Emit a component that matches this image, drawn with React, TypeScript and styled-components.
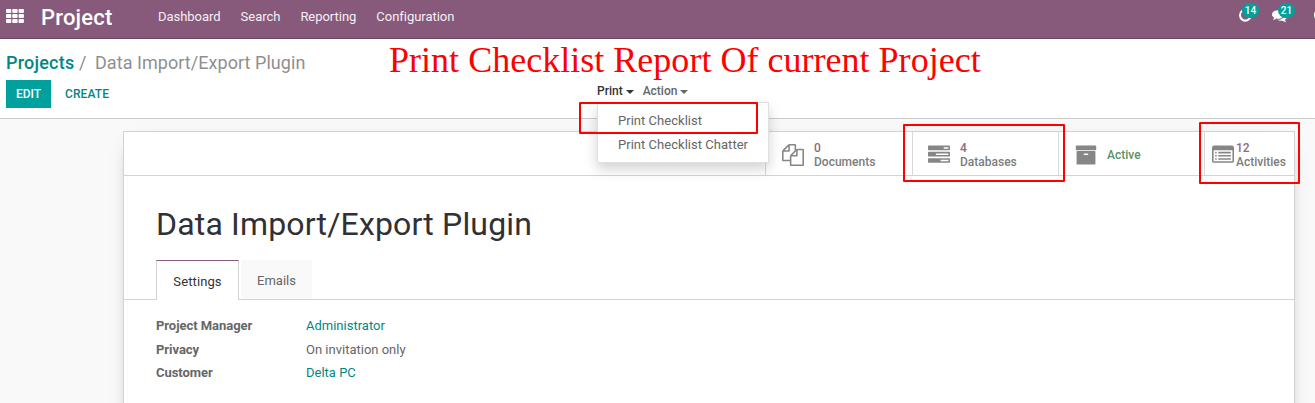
import React from "react";
import styled, { createGlobalStyle, css } from "styled-components";

const Global = createGlobalStyle`
  *, *::before, *::after { box-sizing: border-box; }
  html, body { margin: 0; height: 100%; overflow: hidden; }
  body { background: #f9f9f9; color: #666; font: 13px/20px Roboto, "Liberation Sans", sans-serif; }
`;

const Page = styled.div`
  position: relative;
  height: 403px;
  overflow: hidden;
`;

const NavBar = styled.header`
  display: flex;
  height: 39px;
  padding-left: 6px;
  background: #875a7b;
  border-bottom: 1px solid #68465f;
  color: #fff;
`;

const AppsIcon = styled.svg`
  width: 18px;
  height: 14px;
  margin-top: 9px;
  fill: #fff;
`;

const Brand = styled.div`
  width: 102px;
  margin-left: 17px;
  font-size: 22px;
  font-weight: 500;
  line-height: 35px;
  letter-spacing: 0.2px;
`;

const NavLinks = styled.nav`
  display: flex;
  gap: 20px;
  margin-left: 15px;
  line-height: 33px;
`;

const NavLink = styled.a`
  color: #f5eff3;
  letter-spacing: -0.03px;
`;

const Systray = styled.div`
  display: flex;
  margin-left: auto;
  width: 77px;
  overflow: hidden;
`;

const TrayItem = styled.div<{ $width: number }>`
  position: relative;
  flex: none;
  width: ${(p) => p.$width}px;
  height: 38px;
  padding-top: 8px;
`;

const Badge = styled.span<{ $left: number }>`
  position: absolute;
  top: 3px;
  left: ${(p) => p.$left}px;
  width: 17px;
  height: 15px;
  border-radius: 8px;
  background: #00a09d;
  font-size: 10px;
  font-weight: 500;
  line-height: 16px;
  text-align: center;
`;

const ControlPanel = styled.section`
  height: 80px;
  background: #fff;
  border-bottom: 1px solid #cacaca;
  padding: 13px 6px 0;
`;

const Breadcrumb = styled.div`
  display: flex;
  height: 22px;
  font-size: 18px;
  line-height: 22px;
  letter-spacing: 0.05px;
  color: #8f8f8f;
`;

const Crumb = styled.a`
  width: 68px;
  color: #008784;
  font-weight: 500;
  letter-spacing: 0.22px;
`;

const Slash = styled.span`
  width: 16px;
  margin-left: 5px;
`;

const Actions = styled.div`
  display: flex;
  margin-top: 6px;
  height: 28px;
`;

const ActionButton = styled.button<{ $primary?: boolean }>`
  width: ${(p) => (p.$primary ? 45 : 65)}px;
  height: 28px;
  padding: 0;
  border: 0;
  font: 500 12px/28px Roboto, sans-serif;
  ${(p) =>
    p.$primary
      ? css`
          background: #00a09d;
          color: #fff;
        `
      : css`
          margin-left: 4px;
          background: none;
          color: #008784;
          letter-spacing: 0.1px;
          padding-right: 1px;
        `}
`;

const Toggles = styled.div`
  display: flex;
  margin-left: 477px;
  gap: 9px;
  padding-top: 1px;
`;

const Toggle = styled.div<{ $open?: boolean }>`
  display: flex;
  position: relative;
  font-size: 12px;
  font-weight: 500;
  color: ${(p) => (p.$open ? "#333" : "#666")};
`;

const Caret = styled.span`
  margin: 9px 0 0 3px;
  width: 8px;
  height: 4px;
  border: 4px solid transparent;
  border-top-color: currentColor;
  border-bottom: 0;
`;

const Menu = styled.div`
  position: absolute;
  z-index: 2;
  top: 21px;
  left: 0;
  width: 172px;
  height: 61px;
  padding: 6px 0 0 20px;
  border: 1px solid #e0e0e0;
  background: #fff;
  box-shadow: 0 6px 12px rgba(0, 0, 0, 0.175);
`;

const MenuItem = styled.div`
  height: 24px;
  line-height: 24px;
  font-size: 13px;
  font-weight: 400;
  letter-spacing: 0.03px;
  color: #666;
  white-space: nowrap;
`;

const Sheet = styled.main`
  width: 1172px;
  height: 330px;
  margin: 12px 0 0 123px;
  background: #fff;
  border: 1px solid #d3d3d3;
  box-shadow: 0 5px 20px -15px #000;
`;

const StatBar = styled.div`
  display: flex;
  justify-content: flex-end;
  height: 44px;
  border-bottom: 1px solid #d3d3d3;
`;

const StatButton = styled.div<{ $width: number; $pad: number; $gap: number }>`
  display: flex;
  align-items: center;
  gap: ${(p) => p.$gap}px;
  width: ${(p) => p.$width}px;
  padding: 3px 0 0 ${(p) => p.$pad}px;
  border-left: 1px solid #d9d9d9;
  color: #868686;
`;

const StatText = styled.div`
  font-size: 12px;
  font-weight: 500;
  line-height: 14px;
  color: #7c7c7c;
`;

const StatValue = styled.div`
  color: #8d6a86;
  font-size: 12px;
`;

const Active = styled.span`
  color: #5d9065;
`;

const Title = styled.h1`
  margin: 27px 0 0 32px;
  height: 42px;
  font-size: 32px;
  font-weight: 400;
  line-height: 42px;
  letter-spacing: 0.17px;
  color: #2f3136;
`;

const Tabs = styled.div`
  display: flex;
  align-items: flex-start;
  gap: 2px;
  height: 40px;
  margin-top: 15px;
  padding-left: 32px;
  border-bottom: 1px solid #d3d3d3;
`;

const Tab = styled.div<{ $active?: boolean }>`
  text-align: center;
  ${(p) =>
    p.$active
      ? css`
          width: 83px;
          height: 40px;
          line-height: 42px;
          background: #fff;
          color: #333;
          letter-spacing: 0.1px;
          border: 1px solid #d3d3d3;
          border-top-color: #875a7b;
          border-bottom: 0;
        `
      : css`
          width: 71px;
          height: 39px;
          line-height: 41px;
          background: #f9f9f9;
        `}
`;

const Fields = styled.dl`
  display: grid;
  grid-template-columns: 150px 1fr;
  grid-auto-rows: 23.5px;
  margin: 14px 0 0 32px;
  line-height: 24px;
`;

const Label = styled.dt`
  font-weight: 700;
  letter-spacing: -0.04px;
`;

const Value = styled.dd<{ $link?: boolean }>`
  margin: 0;
  color: ${(p) => (p.$link ? "#008784" : "#666")};
`;

const Caption = styled.div`
  position: absolute;
  left: 389px;
  top: 39px;
  font: 36px/42px "Liberation Serif", serif;
  letter-spacing: 0.02px;
  color: #f00;
  white-space: nowrap;
`;

const Highlight = styled.div<{ $x: number; $y: number; $w: number; $h: number }>`
  position: absolute;
  z-index: 3;
  left: ${(p) => p.$x}px;
  top: ${(p) => p.$y}px;
  width: ${(p) => p.$w}px;
  height: ${(p) => p.$h}px;
  border: 2px solid #f00;
  border-radius: 1px;
`;

const Glyph = styled.svg`
  display: block;
  flex: none;
  fill: currentColor;
`;

const Icon = ({ d, size = 22 }: { d: string; size?: number }) => (
  <Glyph width={size} height={size} viewBox="0 0 1792 1792">
    <path d={d} />
  </Glyph>
);

const bullet = (y: number) =>
  `M384 ${y}v64q0 13-9.5 22.5t-22.5 9.5h-64q-13 0-22.5-9.5t-9.5-22.5v-64q0-13 9.5-22.5t22.5-9.5h64q13 0 22.5 9.5t9.5 22.5z` +
  `M1536 ${y}v64q0 13-9.5 22.5t-22.5 9.5h-960q-13 0-22.5-9.5t-9.5-22.5v-64q0-13 9.5-22.5t22.5-9.5h960q13 0 22.5 9.5t9.5 22.5z`;

const slab = (y: number) =>
  `M1792 ${y}v256q0 26-19 45t-45 19h-1664q-26 0-45-19t-19-45v-256q0-26 19-45t45-19h1664q26 0 45 19t19 45z`;

const icons = {
  files:
    "M1696 384q40 0 68 28t28 68v1216q0 40-28 68t-68 28h-960q-40 0-68-28t-28-68v-288h-544q-40 0-68-28t-28-68v-672q0-40 20-88t48-76l408-408q28-28 76-48t88-20h416q40 0 68 28t28 68v328q68-40 128-40h416zm-544 213l-299 299h299v-299zm-640-384l-299 299h299v-299zm196 647l316-316v-416h-384v416q0 40-28 68t-68 28h-416v640h512v-256q0-40 20-88t48-76zm956 804v-1152h-384v416q0 40-28 68t-68 28h-416v640h896z",
  tasks:
    "M1024 1408h640v-128h-640zM640 896h1024v-128h-1024zM1280 384h384v-128h-384z" +
    slab(1216) +
    slab(704) +
    slab(192),
  archive:
    "M1088 832q0-26-19-45t-45-19h-256q-26 0-45 19t-19 45 19 45 45 19h256q26 0 45-19t19-45zm576-192v960q0 26-19 45t-45 19h-1408q-26 0-45-19t-19-45v-960q0-26 19-45t45-19h1408q26 0 45 19t19 45zm64-448v256q0 26-19 45t-45 19h-1536q-26 0-45-19t-19-45v-256q0-26 19-45t45-19h1536q26 0 45 19t19 45z",
  list:
    bullet(1184) +
    bullet(928) +
    bullet(672) +
    "M1664 1376v-832q0-13-9.5-22.5t-22.5-9.5h-1472q-13 0-22.5 9.5t-9.5 22.5v832q0 13 9.5 22.5t22.5 9.5h1472q13 0 22.5-9.5t9.5-22.5zm128-1088v1088q0 66-47 113t-113 47h-1472q-66 0-113-47t-47-113v-1088q0-66 47-113t113-47h1472q66 0 113 47t47 113z",
  comments:
    "M1408 768q0 139-94 257t-256.5 186.5-353.5 68.5q-86 0-176-16-124 88-278 128-36 9-86 16h-3q-11 0-20.5-8t-11.5-21q-1-3-1-6.5t.5-6.5 2-6l2.5-5 3.5-5.5 4-5 4.5-5 4-4.5q5-6 23-25t26-29.5 22.5-29 25-38.5 20.5-44q-124-72-195-177t-71-224q0-139 94-257t256.5-186.5 353.5-68.5 353.5 68.5 256.5 186.5 94 257zm384 256q0 120-71 224.5t-195 176.5q10 24 20.5 44t25 38.5 22.5 29 26 29.5 23 25q1 1 4 4.5t4.5 5 4 5 3.5 5.5l2.5 5 2 6 .5 6.5-1 6.5q-3 14-13 22t-22 7q-50-7-86-16-154-40-278-128-90 16-176 16-271 0-472-132 58 4 88 4 161 0 309-45t264-129q125-92 192-212t67-254q0-77-23-152 129 71 204 178t75 230z",
};

const highlights = [
  [579, 102, 179, 32],
  [903, 124, 162, 58],
  [1199, 122, 101, 62],
];

export default function App() {
  return (
    <Page>
      <Global />
      <NavBar>
        <AppsIcon viewBox="0 0 18 14">
          {[0, 5, 10].map((y) =>
            [0, 6.3, 12.6].map((x) => <rect key={`${x}-${y}`} x={x} y={y} width="5.3" height="4" rx="0.8" />)
          )}
        </AppsIcon>
        <Brand>Project</Brand>
        <NavLinks>
          <NavLink>Dashboard</NavLink>
          <NavLink>Search</NavLink>
          <NavLink>Reporting</NavLink>
          <NavLink>Configuration</NavLink>
        </NavLinks>
        <Systray>
          <TrayItem $width={34}>
            <Glyph width="15" height="15" viewBox="0 0 15 15">
              <path d="M4.2 2.8A5.4 5.4 0 1 0 12.7 8" fill="none" stroke="#fff" strokeWidth="2" />
            </Glyph>
            <Badge $left={4}>14</Badge>
          </TrayItem>
          <TrayItem $width={42}>
            <Icon d={icons.comments} size={15} />
            <Badge $left={6}>21</Badge>
          </TrayItem>
          <TrayItem $width={14}>
            <Glyph width="14" height="14" viewBox="0 0 14 14">
              <circle cx="7" cy="7" r="7" />
            </Glyph>
          </TrayItem>
        </Systray>
      </NavBar>

      <ControlPanel>
        <Breadcrumb>
          <Crumb>Projects</Crumb>
          <Slash>/</Slash>
          <span>Data Import/Export Plugin</span>
        </Breadcrumb>
        <Actions>
          <ActionButton $primary>EDIT</ActionButton>
          <ActionButton>CREATE</ActionButton>
          <Toggles>
            <Toggle $open>
              Print
              <Caret />
              <Menu>
                <MenuItem>Print Checklist</MenuItem>
                <MenuItem>Print Checklist Chatter</MenuItem>
              </Menu>
            </Toggle>
            <Toggle>
              Action
              <Caret />
            </Toggle>
          </Toggles>
        </Actions>
      </ControlPanel>

      <Sheet>
        <StatBar>
          <StatButton $width={147} $pad={16} $gap={10}>
            <Icon d={icons.files} />
            <StatText>
              <StatValue>0</StatValue>
              Documents
            </StatText>
          </StatButton>
          <StatButton $width={146} $pad={15} $gap={10}>
            <Icon d={icons.tasks} />
            <StatText>
              <StatValue>4</StatValue>
              Databases
            </StatText>
          </StatButton>
          <StatButton $width={146} $pad={16} $gap={10}>
            <Icon d={icons.archive} />
            <StatText>
              <Active>Active</Active>
            </StatText>
          </StatButton>
          <StatButton $width={90} $pad={7} $gap={2}>
            <Icon d={icons.list} />
            <StatText>
              <StatValue>12</StatValue>
              Activities
            </StatText>
          </StatButton>
        </StatBar>
        <Title>Data Import/Export Plugin</Title>
        <Tabs>
          <Tab $active>Settings</Tab>
          <Tab>Emails</Tab>
        </Tabs>
        <Fields>
          <Label>Project Manager</Label>
          <Value $link>Administrator</Value>
          <Label>Privacy</Label>
          <Value>On invitation only</Value>
          <Label>Customer</Label>
          <Value $link>Delta PC</Value>
        </Fields>
      </Sheet>

      <Caption>Print Checklist Report Of current Project</Caption>
      {highlights.map(([x, y, w, h]) => (
        <Highlight key={x} $x={x} $y={y} $w={w} $h={h} />
      ))}
    </Page>
  );
}
